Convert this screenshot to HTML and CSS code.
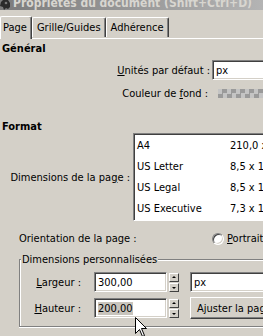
FILE: index.html
```html
<!DOCTYPE html>
<html lang="fr">
<head>
<meta charset="utf-8">
<link rel="stylesheet" href="styles.css">
</head>
<body>
<div class="title">
  <svg class="title-icon" width="11" height="10" viewBox="0 0 11 10"><path d="M1 2 L3 0 L8 0 L10 3 L10 7 L8 9 L6 8 L4 10 L3 7 L0 6 Z" fill="#2a2a2a"/><circle cx="6" cy="3" r="1.3" fill="#777"/></svg>
  <span>Propriétés du document (Shift+Ctrl+D)</span>
</div>
<div class="tabs">
  <div class="tab active">Page</div>
  <div class="tab">Grille/Guides</div>
  <div class="tab">Adhérence</div>
</div>
<div class="panel">
  <div class="heading">Général</div>
  <div class="row units">
    <span class="lbl"><u>U</u>nités par défaut :</span>
    <div class="entry wide">px</div>
  </div>
  <div class="row bgcolor">
    <span class="lbl">Couleur de <u>f</u>ond :</span>
    <div class="checker"></div>
  </div>
  <div class="heading format">Format</div>
  <div class="row size">
    <span class="lbl">Dimensions de la pa<u>g</u>e :</span>
    <div class="list">
      <div class="item"><span class="name">A4</span><span>210,0 x 297,0 mm</span></div>
      <div class="item"><span class="name">US Letter</span><span>8,5 x 11,0 in</span></div>
      <div class="item"><span class="name">US Legal</span><span>8,5 x 14,0 in</span></div>
      <div class="item"><span class="name">US Executive</span><span>7,3 x 10,5 in</span></div>
    </div>
  </div>
  <div class="row orient">
    <span class="lbl">Orientation de la page :</span>
    <span class="radio"></span>
    <span><u>P</u>ortrait</span>
  </div>
  <fieldset class="custom">
    <legend>Dimensions personnalisées</legend>
    <div class="frow">
      <span class="flbl"><u>L</u>argeur :</span>
      <div class="entry num">300,00</div>
      <div class="spin"><span class="up"></span><span class="down"></span></div>
      <div class="entry wide unit">px</div>
    </div>
    <div class="frow">
      <span class="flbl"><u>H</u>auteur :</span>
      <div class="entry num"><span class="sel">200,00</span></div>
      <div class="spin"><span class="up"></span><span class="down"></span></div>
      <div class="button">Ajuster la page au dessin</div>
    </div>
  </fieldset>
</div>
<svg class="cursor" width="13" height="21" viewBox="0 0 13 21"><path d="M0.5 0.5 L0.5 16.5 L4.5 12.5 L7.5 19.5 L9.5 18.5 L6.5 11.5 L11.5 11.5 Z" fill="#fff" stroke="#000" stroke-width="1"/></svg>
</body>
</html>
```
FILE: styles.css
```css
* { box-sizing: border-box; }
html, body { margin: 0; padding: 0; }
body {
  width: 263px;
  height: 336px;
  overflow: hidden;
  position: relative;
  background: #d4d0c8;
  color: #000;
  font-family: "DejaVu Sans Condensed", "DejaVu Sans", sans-serif;
  font-stretch: condensed;
  font-size: 11px;
  line-height: 13px;
  white-space: nowrap;
}
u { text-decoration: underline; text-underline-offset: 1px; }

.title {
  height: 10px;
  background: linear-gradient(to right, #7c7c7c, #b4b4b4);
  color: #d8d6d0;
  font-weight: bold;
  font-size: 12px;
  line-height: 10px;
  display: flex;
  align-items: flex-start;
  gap: 2px;
  overflow: hidden;
}
.title span { margin-top: -2px; }
.title-icon { flex: none; }

.tabs {
  display: flex;
  align-items: flex-end;
  height: 28px;
  position: relative;
  z-index: 1;
}
.tab {
  height: 20px;
  padding: 3px 4px 0 4px;
  border: 1px solid #fff;
  border-right-color: #404040;
  border-bottom: none;
  border-radius: 2px 2px 0 0;
  box-shadow: inset -1px 0 #808080;
  margin-bottom: 1px;
}
.tab.active {
  height: 23px;
  padding-top: 4px;
  margin-bottom: -1px;
  background: #d4d0c8;
  padding-left: 2px;
  padding-right: 4px;
}

.panel {
  border-top: 1px solid #fff;
  height: 298px;
}
.heading {
  font-weight: bold;
  padding-left: 2px;
  margin-top: 3px;
  height: 13px;
}
.row { display: flex; align-items: center; }
.lbl { text-align: right; flex: none; }

.units { margin-top: 5px; }
.units .lbl { width: 210px; margin-right: 2px; }
.entry {
  height: 20px;
  background: #fff;
  border: 1px solid;
  border-color: #808080 #fff #fff #808080;
  box-shadow: inset 1px 1px #404040, inset -1px -1px #d4d0c8;
  padding: 3px 2px 0 3px;
}
.entry.wide { flex: 1; min-width: 80px; }

.bgcolor { margin-top: 7px; }
.bgcolor .lbl { width: 208px; margin-right: 10px; }
.checker {
  flex: 1;
  height: 9px;
  background: repeating-conic-gradient(#9a9a9a 0 25%, #c4c4c4 0 50%) 0 0 / 9px 9px;
}

.format { margin-top: 20px; }
.size { margin-top: 0; }
.size .lbl { width: 130px; margin-right: 3px; }
.list {
  width: 140px;
  flex: none;
  height: 88px;
  background: #fff;
  border: 1px solid;
  border-color: #808080 #fff #fff #808080;
  box-shadow: inset 1px 1px #404040;
  padding: 1px 0 0 3px;
}
.item { display: flex; height: 21px; line-height: 21px; }
.item .name { width: 93px; flex: none; }

.orient { margin-top: 11px; padding-left: 19px; }
.orient .lbl { width: 193px; text-align: left; }
.radio {
  width: 12px;
  height: 12px;
  border-radius: 50%;
  background: #fff;
  border: 1px solid;
  border-color: #808080 #fff #fff #808080;
  box-shadow: inset 1px 1px #404040, inset -1px -1px #d4d0c8;
  margin-right: 3px;
  flex: none;
}

.custom {
  margin: 8px 0 0 19px;
  padding: 6px 0 7px 0;
  border: 1px solid #808080;
  border-right: none;
  box-shadow: inset 1px 1px #fff, 0 1px #fff;
  min-width: 0;
  width: 260px;
}
.custom legend {
  padding: 0 1px;
  margin-left: 1px;
  background: #d4d0c8;
}
.frow { display: flex; align-items: center; margin-top: 5px; }
.frow:first-of-type { margin-top: 0; }
.flbl { width: 61px; text-align: right; margin-right: 13px; flex: none; }
.entry.num { width: 73px; flex: none; margin-right: 2px; }
.sel { background: #c8c4bc; }
.spin {
  width: 10px;
  height: 19px;
  display: flex;
  flex-direction: column;
  gap: 1px;
  margin-right: 11px;
  flex: none;
}
.spin span {
  height: 9px;
  background: #d4d0c8;
  border: 1px solid;
  border-color: #fff #404040 #404040 #fff;
  position: relative;
}
.spin span::after {
  content: "";
  position: absolute;
  left: 2px;
  border-left: 2px solid transparent;
  border-right: 2px solid transparent;
}
.spin .up::after { top: 2px; border-bottom: 2px solid #000; }
.spin .down::after { top: 3px; border-top: 2px solid #000; }
.button {
  height: 22px;
  flex: none;
  padding: 4px 6px 0 6px;
  background: #d4d0c8;
  border: 1px solid;
  border-color: #fff #404040 #404040 #fff;
  box-shadow: inset -1px -1px #808080;
}

.cursor { position: absolute; left: 135px; top: 317px; }
```
